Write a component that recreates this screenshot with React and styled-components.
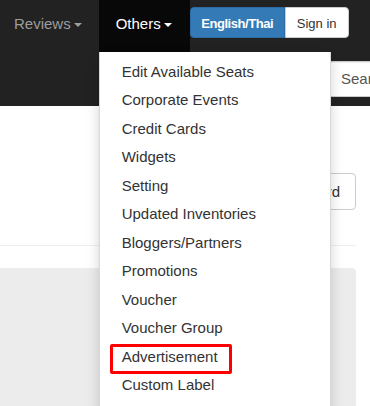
import React from "react";
import { styled, createGlobalStyle } from "styled-components";

const GlobalStyle = createGlobalStyle`
  html, body {
    margin: 0;
    padding: 0;
    overflow: hidden;
    background: #fff;
  }
  body {
    font-family: "Liberation Sans", Arial, sans-serif;
    font-size: 15px;
    color: #333;
  }
  *, *::before, *::after {
    box-sizing: border-box;
  }
`;

const Navbar = styled.header`
  background: #222;
  height: 106px;
  position: relative;
  z-index: 10;
`;

const TopRow = styled.div`
  display: flex;
  align-items: flex-start;
  height: 52px;
`;

const NavItem = styled.div`
  position: relative;
  height: 52px;
  display: flex;
  align-items: flex-start;
  padding: 14px 17px 0 ${(p) => (p.$first ? "14px" : "17px")};
  font-size: 15px;
  line-height: 20px;
  color: ${(p) => (p.$active ? "#fff" : "#9d9d9d")};
  background: ${(p) => (p.$active ? "#080808" : "transparent")};
  width: ${(p) => p.$width || "auto"};
`;

const Caret = styled.span`
  display: inline-block;
  width: 0;
  height: 0;
  margin: 9px 0 0 3px;
  border-top: 4px solid currentColor;
  border-left: 4px solid transparent;
  border-right: 4px solid transparent;
`;

const ButtonGroup = styled.div`
  display: flex;
  margin-top: 7px;
`;

const NavButton = styled.button`
  height: 31px;
  padding: 1px 0 0;
  font-family: "Liberation Sans", Arial, sans-serif;
  font-size: 13px;
  font-weight: ${(p) => (p.$primary ? 700 : 400)};
  letter-spacing: ${(p) => (p.$primary ? "-0.45px" : "0")};
  white-space: nowrap;
  color: ${(p) => (p.$primary ? "#fff" : "#333")};
  background: ${(p) => (p.$primary ? "#337ab7" : "#fff")};
  border: 1px solid ${(p) => (p.$primary ? "#2e6da4" : "#ccc")};
  border-radius: ${(p) => (p.$primary ? "4px 0 0 4px" : "0 4px 4px 0")};
  width: ${(p) => (p.$primary ? "95px" : "64px")};
`;

const SearchRow = styled.div`
  display: flex;
  padding: 9px 0 0 328px;
  overflow: hidden;
  width: 370px;
`;

const SearchInput = styled.div`
  flex: 0 0 200px;
  height: 36px;
  background: #fff;
  border: 1px solid #ccc;
  border-radius: 4px;
  box-shadow: inset 0 1px 1px rgba(0, 0, 0, 0.075);
  padding: 0 12px;
  font-size: 15px;
  line-height: 34px;
  color: #555;
  white-space: nowrap;
`;

const Dropdown = styled.ul`
  position: absolute;
  top: 52px;
  left: 0;
  width: 232px;
  margin: 0;
  padding: 6px 0 14px;
  list-style: none;
  background: #fff;
  border: 1px solid rgba(0, 0, 0, 0.15);
  border-top: 0;
  box-shadow: 0 6px 12px rgba(0, 0, 0, 0.175);
  z-index: 20;
`;

const MenuItem = styled.li`
  position: relative;
  padding: 3px 22px;
  font-size: 15px;
  line-height: 22.45px;
  color: #333;
  white-space: nowrap;

  &::after {
    content: "";
    display: ${(p) => (p.$marked ? "block" : "none")};
    position: absolute;
    left: 10px;
    top: 1px;
    width: 122px;
    height: 30px;
    border: 3px solid #f00;
    border-radius: 2px;
  }
`;

const Main = styled.main`
  padding: 0 14px 0 0;
`;

const PageHeader = styled.div`
  display: flex;
  justify-content: flex-end;
  padding: 67px 0 35px;
  border-bottom: 1px solid #eee;
`;

const HeaderButton = styled.button`
  height: 37px;
  padding: 0 15px;
  font-family: "Liberation Sans", Arial, sans-serif;
  font-size: 15px;
  color: #333;
  background: #fff;
  border: 1px solid #ccc;
  border-radius: 4px;
`;

const Panel = styled.section`
  margin-top: 22px;
  height: 200px;
  background: #ececec;
  border-radius: 0 4px 0 0;
`;

const menu = [
  "Edit Available Seats",
  "Corporate Events",
  "Credit Cards",
  "Widgets",
  "Setting",
  "Updated Inventories",
  "Bloggers/Partners",
  "Promotions",
  "Voucher",
  "Voucher Group",
  "Advertisement",
  "Custom Label",
];

const App = () => {
  return (
    <>
      <GlobalStyle />
      <Navbar>
        <TopRow>
          <NavItem $first>
            Reviews
            <Caret />
          </NavItem>
          <NavItem $active $width="91px">
            Others
            <Caret />
            <Dropdown>
              {menu.map((m) => (
                <MenuItem key={m} $marked={m === "Advertisement"}>
                  {m}
                </MenuItem>
              ))}
            </Dropdown>
          </NavItem>
          <ButtonGroup>
            <NavButton $primary>English/Thai</NavButton>
            <NavButton>Sign in</NavButton>
          </ButtonGroup>
        </TopRow>
        <SearchRow>
          <SearchInput>Search</SearchInput>
        </SearchRow>
      </Navbar>
      <Main>
        <PageHeader>
          <HeaderButton>Dashboard</HeaderButton>
        </PageHeader>
        <Panel />
      </Main>
    </>
  );
};

export default App;
